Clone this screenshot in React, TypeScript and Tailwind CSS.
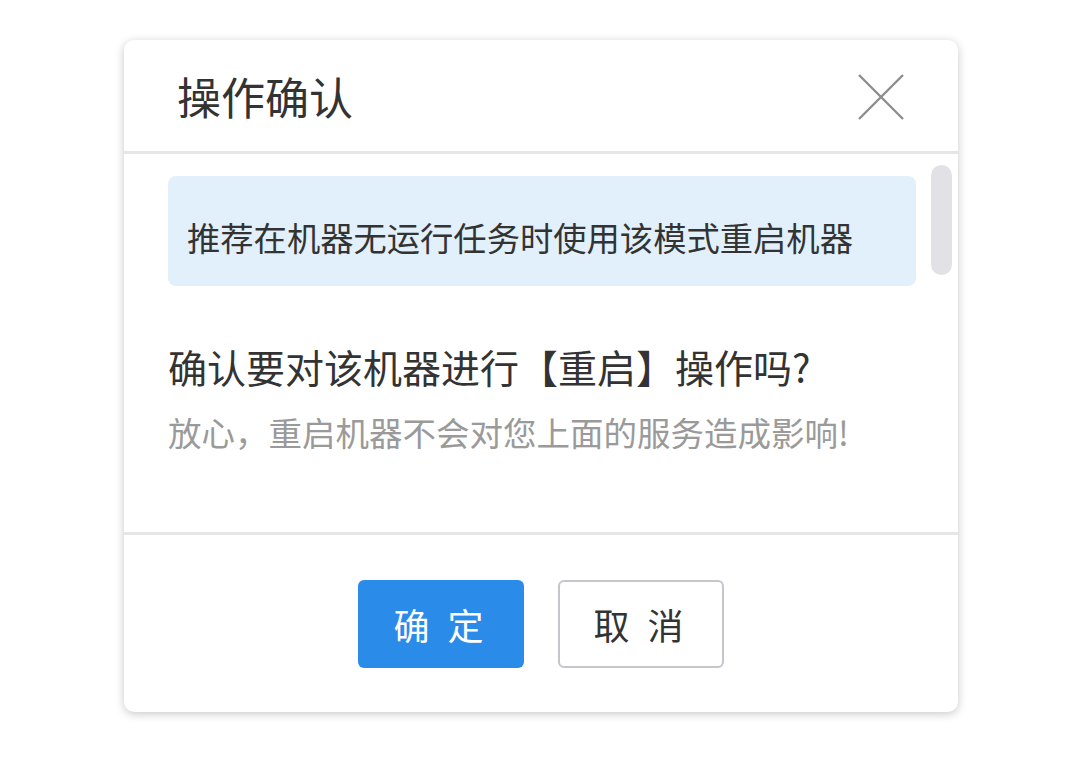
export default function App() {
  return (
    <div
      className="h-[758px] w-[1080px] bg-white pt-[40px] pl-[124px]"
      style={{ fontFamily: '"Noto Sans CJK SC", "Noto Sans", sans-serif' }}
    >
      <div className="flex w-[834px] flex-col rounded-[10px] bg-white shadow-[0_2px_10px_rgba(0,0,0,0.22)]">
        {/* header */}
        <div className="flex h-[114px] items-center justify-between border-b-[3px] border-[#e6e6e8] pl-[53px] pr-[54px]">
          <h2 className="text-[44px] leading-none text-[#333]">操作确认</h2>
          <svg width="46" height="46" viewBox="0 0 46 46" className="mt-[2px]">
            <path d="M1 1 L45 45 M45 1 L1 45" stroke="#8e8e8e" strokeWidth="2.4" fill="none" />
          </svg>
        </div>

        {/* body */}
        <div className="relative h-[378px] pl-[44px] pr-[42px] pt-[22px]">
          <div className="h-[110px] rounded-[8px] bg-[#e2f0fb] px-[19px] pt-[44px]">
            <p className="text-[33.3px] leading-none text-[#333]">推荐在机器无运行任务时使用该模式重启机器</p>
          </div>
          <p className="mt-[56px] text-[39px] leading-[48px] text-[#333]">确认要对该机器进行【重启】操作吗?</p>
          <p className="mt-[20px] text-[33.5px] leading-[44px] text-[#9a9a9a]">放心，重启机器不会对您上面的服务造成影响!</p>
          <div className="absolute right-[6px] top-[11px] h-[110px] w-[21px] rounded-full bg-[#e1e1e6]" />
        </div>

        {/* footer */}
        <div className="flex h-[180px] items-center justify-center gap-[34px] border-t-[3px] border-[#e6e6e8]">
          <button className="h-[88px] w-[166px] rounded-[6px] bg-[#2a8be9] text-[36px] tracking-[5px] text-white">
            确 定
          </button>
          <button className="h-[88px] w-[166px] rounded-[6px] border-2 border-[#c5c6cc] bg-white text-[36px] tracking-[5px] text-[#333]">
            取 消
          </button>
        </div>
      </div>
    </div>
  );
}
